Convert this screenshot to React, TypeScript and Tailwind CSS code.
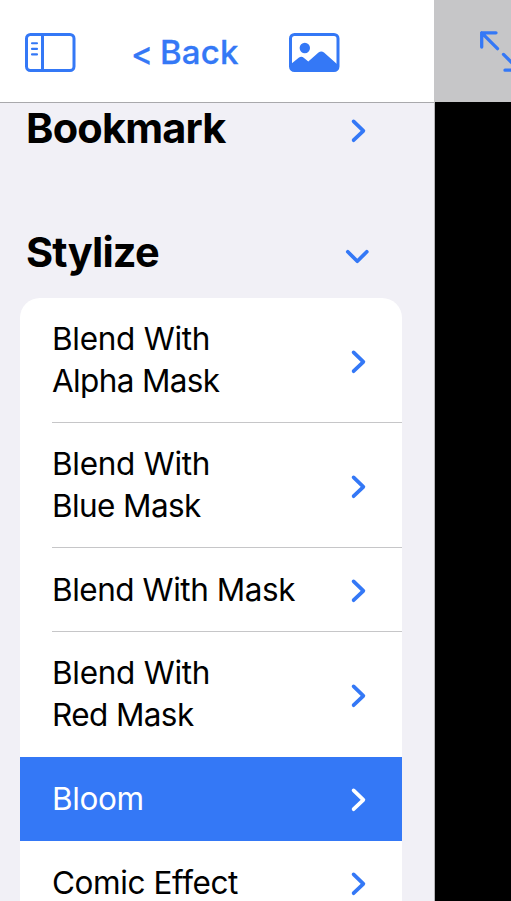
import React from "react";

const blue = "#3478f6";

function Chevron({ down = false, color = blue }: { down?: boolean; color?: string }) {
  return (
    <svg width="32" height="32" viewBox="0 0 32 32" fill="none" stroke={color} strokeWidth="3.7" strokeLinecap="round" strokeLinejoin="round">
      <path d={down ? "M5.8 12.8L15.3 22.2L24.8 12.8" : "M11.6 6.4L21.4 15.8L11.6 25.2"} />
    </svg>
  );
}

type Line = { text: string; tracking: string };
type Item = { lines: Line[]; selected?: boolean; box: string; arrow: string; h: string };

const ruled = "border-b border-[#c6c6c8]";

const items: Item[] = [
  { lines: [{ text: "Blend With", tracking: "tracking-[-0.28px]" }, { text: "Alpha Mask", tracking: "tracking-[-0.65px]" }], box: ruled, arrow: "pt-[3px]", h: "h-[125px]" },
  { lines: [{ text: "Blend With", tracking: "tracking-[-0.28px]" }, { text: "Blue Mask", tracking: "tracking-[-0.6px]" }], box: ruled, arrow: "pt-[3px]", h: "h-[125px]" },
  { lines: [{ text: "Blend With Mask", tracking: "tracking-[-0.46px]" }], box: ruled, arrow: "pt-[3px]", h: "h-[84px]" },
  { lines: [{ text: "Blend With", tracking: "tracking-[-0.28px]" }, { text: "Red Mask", tracking: "tracking-[-0.6px]" }], box: "pb-0.5", arrow: "pt-[5px]", h: "h-[125px]" },
  { lines: [{ text: "Bloom", tracking: "tracking-[-0.4px]" }], selected: true, box: "", arrow: "pt-px", h: "h-[84px]" },
  { lines: [{ text: "Comic Effect", tracking: "tracking-[-0.4px]" }], box: "", arrow: "pt-px", h: "h-[84px]" },
];

function Row({ item }: { item: Item }) {
  return (
    <div className={`shrink-0 pl-8 ${item.h} ${item.selected ? "bg-[#3478f6] text-white" : "text-black"}`}>
      <div className={`flex h-full items-center justify-between pr-7 ${item.box}`}>
        <div className="whitespace-nowrap text-[31.5px] leading-[42px]">
          {item.lines.map((l) => <div key={l.text} className={l.tracking}>{l.text}</div>)}
        </div>
        <div className={item.arrow}>
          <Chevron color={item.selected ? "#ffffff" : blue} />
        </div>
      </div>
    </div>
  );
}

export default function App() {
  return (
    <div className="flex h-[901px] w-[511px] flex-col overflow-hidden bg-black font-['Inter',sans-serif]">
      <div className="flex h-[102px] shrink-0">
        <header className="flex w-[434px] shrink-0 items-center bg-white pl-6 pt-[3px]">
          <svg width="52" height="40" viewBox="0 0 52 40" fill="none" stroke={blue} strokeWidth="3">
            <rect x="2.5" y="1.5" width="47.5" height="36" rx="4" />
            <path d="M18.5 2V37" />
            <path d="M8 10.2H13M8 15.9H13M8 21.4H13" strokeWidth="2.1" strokeLinecap="round" />
          </svg>
          <div className="ml-[55px] flex w-[157px] items-center whitespace-nowrap text-[33px] font-medium text-[#3478f6]">
            <span className="w-[29px] pt-0.5 font-medium [-webkit-text-stroke:0.3px_#3478f6]">&lt;</span>
            <span className="tracking-[0.2px] [-webkit-text-stroke:0.3px_#3478f6]">Back</span>
          </div>
          <svg width="52" height="40" viewBox="0 0 52 40" fill="none">
            <rect x="2.5" y="1.5" width="47.5" height="36" rx="4" stroke={blue} strokeWidth="3" />
            <circle cx="16.8" cy="15" r="5.2" fill={blue} />
            <path d="M3 31L11 24.6Q13.5 22.8 16 25L20.3 28.6L30.5 19.5Q33.3 17.3 36 19.5L49.5 31.6V35Q49.5 37.5 47 37.5H5Q3 37.5 3 35Z" fill={blue} />
          </svg>
        </header>
        <div className="flex flex-1 justify-end overflow-hidden bg-[#c6c6c8] pt-[30px]">
          <svg width="32" height="44" viewBox="479 30 32 44" fill="none" stroke={blue} strokeWidth="3.3" strokeLinecap="round" strokeLinejoin="round">
            <path d="M481.7 47V32.8H496M481.7 32.8L497.5 48.7M503.5 54.4L519.3 70.2H505" />
          </svg>
        </div>
      </div>
      <div className="flex w-[435px] flex-1 flex-col overflow-hidden border-r border-[#b5b5b7] bg-[#f1f0f6]">
        <div className="flex h-[57px] shrink-0 items-center justify-between border-t border-[#a9a9ac] pl-[26px] pr-[60px] text-[41.5px] font-bold tracking-[-0.8px]">
          <span className="pb-1.5">Bookmark</span><Chevron />
        </div>
        <div className="mt-16 flex h-[64px] shrink-0 items-center justify-between pl-[26px] pr-[60px] text-[41.5px] font-bold tracking-[-0.8px]">
          <span className="pb-1.5">Stylize</span><Chevron down />
        </div>
        <main className="ml-5 mt-[11px] flex w-[382px] shrink-0 flex-col overflow-hidden rounded-t-[20px] bg-white">
          {items.map((i) => <Row key={i.lines.map((l) => l.text).join()} item={i} />)}
        </main>
      </div>
    </div>
  );
}
